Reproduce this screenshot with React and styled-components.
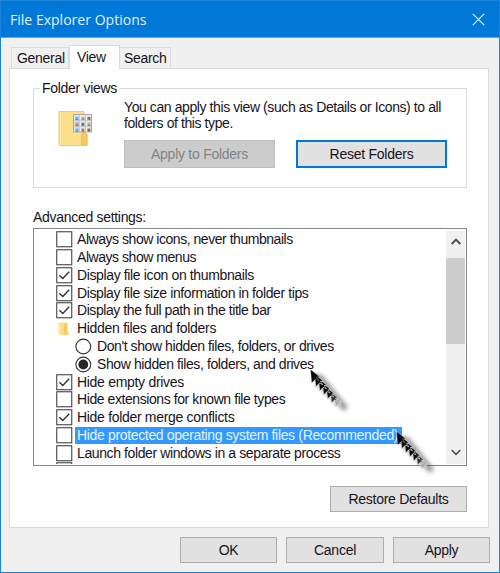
import React from 'react'
import styled, { createGlobalStyle } from 'styled-components'

const GlobalStyle = createGlobalStyle`
  * {
    box-sizing: border-box;
  }
  body {
    margin: 0;
    overflow: hidden;
  }
`

const Window = styled.div`
  position: relative;
  width: 500px;
  height: 573px;
  display: flex;
  flex-direction: column;
  border: 1px solid #1a84d9;
  background: #f0f0f0;
  color: #17131c;
  font: 14px/16px "Liberation Sans", Arial, sans-serif;
  letter-spacing: -0.3px;
  white-space: nowrap;
`

const TitleBar = styled.header`
  height: 37px;
  flex: none;
  display: flex;
  align-items: center;
  justify-content: space-between;
  padding: 1px 14px 0 9px;
  background: #0078d7;
  border-bottom: 1px solid #5fa9e6;
  color: #e4f1fb;
  font-family: "Open Sans", "Noto Sans", sans-serif;
  font-size: 14px;
`

const Title = styled.span`
  letter-spacing: 0.02px;
`

const Tabs = styled.nav`
  display: flex;
  align-items: flex-end;
  height: 30px;
  flex: none;
  padding-left: 10px;
`

const Tab = styled.div`
  position: relative;
  z-index: ${p => p.$active ? 1 : 0};
  width: ${p => p.$width}px;
  height: ${p => p.$active ? 24 : 21}px;
  margin-bottom: ${p => p.$active ? -1 : 0}px;
  padding: ${p => p.$active ? '3px 0 0 7px' : '2px 0 0 5px'};
  border: 1px solid #dcdcdc;
  border-bottom: 0;
  ${p => p.$joined && 'border-left: 0; padding-left: 4px;'}
  background: ${p => p.$active ? '#fff' : '#f0f0f0'};
`

const Panel = styled.main`
  width: 480px;
  height: 460px;
  flex: none;
  margin-left: 8px;
  padding: 11px 21px 0 23px;
  border: 1px solid #dcdcdc;
  background: #fff;
`

const Group = styled.fieldset`
  height: 108px;
  width: 434px;
  margin: 0;
  padding: 0;
  border: 1px solid #dcdcdc;
`

const Legend = styled.legend`
  margin-left: 6px;
  padding: 0 2px;
  height: 17px;
  line-height: 17px;
`

const GroupBody = styled.div`
  display: flex;
  padding-left: 24px;
  > svg {
    margin-top: 13px;
    margin-right: 31px;
    flex: none;
  }
`

const Description = styled.p`
  margin: 2px 0 9px;
  letter-spacing: -0.41px;
`

const ButtonRow = styled.div`
  display: flex;
  gap: ${p => p.$gap}px;
`

const Button = styled.button`
  width: ${p => p.$width}px;
  height: ${p => p.$height || 26}px;
  padding: 0;
  border: 1px solid #adadad;
  background: #e1e1e1;
  color: inherit;
  font: inherit;
  letter-spacing: -0.26px;
  ${p => p.$focused && 'border: 2px solid #0078d7; outline: 0;'}
  &:disabled {
    border-color: #bfbfbf;
    background: #cccccc;
    color: #838383;
  }
`

const ListLabel = styled.div`
  margin: 21px 0 3px;
`

const List = styled.div`
  display: flex;
  width: 434px;
  height: 238px;
  padding: 2px 1px 1px 0;
  border: 1px solid #828790;
  overflow: hidden;
`

const Rows = styled.div`
  flex: 1;
  overflow: hidden;
`

const Row = styled.div`
  display: flex;
  align-items: center;
  height: 17.78px;
  padding-left: ${p => p.$nested ? 41 : 22}px;
  > svg {
    flex: none;
  }
`

const RowText = styled.span`
  height: 17px;
  margin-left: ${p => p.$nested ? 3 : 2}px;
  padding: 0 ${p => p.$selected ? 4 : 2}px 0 2px;
  line-height: 17px;
  letter-spacing: ${p => p.$spacing || 0}px;
  background: ${p => p.$selected ? '#3399ff' : 'transparent'};
  color: ${p => p.$selected ? '#e6f3ff' : 'inherit'};
`

const ScrollBar = styled.div`
  width: 19px;
  display: flex;
  flex-direction: column;
  justify-content: space-between;
  background: #f0f0f0;
`

const ScrollThumb = styled.div`
  height: 86px;
  margin-bottom: auto;
  background: #cdcdcd;
`

const ScrollArrow = styled.div`
  height: 27px;
  display: flex;
  align-items: center;
  justify-content: center;
  padding-top: ${p => p.$up ? 0 : 4}px;
  padding-bottom: ${p => p.$up ? 7 : 0}px;
`

const RestoreRow = styled.div`
  display: flex;
  justify-content: flex-end;
  width: 434px;
  margin-top: 20px;
`

const Footer = styled.footer`
  display: flex;
  justify-content: flex-end;
  gap: 9px;
  padding: 9px 9px 0 0;
`

const Pointer = styled.svg`
  position: absolute;
  left: ${p => p.$x}px;
  top: ${p => p.$y}px;
`

const CheckBox = ({ checked }) => (
  <svg width="17" height="17" viewBox="0 0 17 17" fill="none">
    <rect x="0.75" y="0.75" width="15" height="15" fill="#fff" stroke="#444" strokeWidth="1.1" />
    {checked && <path d="M3.4 8.3 6.8 11.5 13.2 4.8" stroke="#333" strokeWidth="1.4" />}
  </svg>
)

const Radio = ({ checked }) => (
  <svg width="17" height="17" viewBox="0 0 17 17" fill="none">
    <circle cx="8.3" cy="8.5" r="7.4" fill="#fff" stroke="#333" strokeWidth="1.1" />
    {checked && <circle cx="8.3" cy="8.5" r="4.9" fill="#262626" />}
  </svg>
)

const SmallFolder = () => (
  <svg width="17" height="17" viewBox="0 0 17 17">
    <path d="M2.5 2.5h8.5v9h1.5v3.5h-10z" fill="#fbdc83" />
    <path d="M8 4.5 11.5 3v11L8 15.3z" fill="#f5cd66" />
    <path d="M2.5 2.5h2V15h-2z" fill="#fde8a9" />
  </svg>
)

const thumbs = ['#76aede', '#c8a45c', '#bd5a36', '#e08a55', '#5577a4', '#a6b997', '#6db1e5', '#b9824b', '#ad5138']

const LargeFolder = () => (
  <svg width="35" height="37" viewBox="0 0 35 37">
    <path d="M1 1.5h25v22l3 1v11H1z" fill="#fcdf89" stroke="#eecb6c" />
    <path d="M2.5 2v32.5" stroke="#ffebb2" />
    <path d="M23.5 35.5V25l2-3 3.5 2v11.5z" fill="#f6cb5c" stroke="#e8bc50" strokeWidth=".8" />
    <rect x="15.5" y="4.5" width="18" height="17.5" fill="#f4f4f4" stroke="#aaa" />
    {thumbs.map((color, i) => {
      const x = 16.5 + (i % 3) * 6
      const y = 5.5 + Math.floor(i / 3) * 5.8
      return (
        <g key={i}>
          <rect x={x} y={y} width="4.5" height="4.6" fill={i % 3 === 0 ? '#b9dbf2' : '#dfe3e3'} />
          <rect x={x + 1} y={y + 1.5} width="2.8" height="2.3" fill={color} />
          <path d={`M${x + 1} ${y + 4.2}h3`} stroke="#4f6c83" strokeWidth=".8" />
        </g>
      )
    })}
    <path d="M21.5 5v17M27.5 5v17M16 10.7h17M16 16.5h17" stroke="#b9b9b9" strokeWidth=".7" />
  </svg>
)

// a trail of arrow heads that fades out towards its lower right end
const ArrowTrail = ({ id, x, y }) => (
  <Pointer $x={x} $y={y} width="50" height="52" viewBox="0 0 50 52">
    <defs>
      <filter id={id} x="-30%" y="-30%" width="160%" height="160%">
        <feGaussianBlur stdDeviation="1.9" />
      </filter>
    </defs>
    <path d="M7 6 15 9 40 40 36 44 9 18z" fill="#555" opacity=".6" filter={`url(#${id})`} />
    {[6, 5, 4, 3, 2, 1, 0].map(i => (
      <path
        key={i}
        transform={`translate(${2.5 + i * 4} ${2.5 + i * 4.5}) scale(${1 - i * 0.035})`}
        d="M0 0 9.2 7.2 6 7.6 8.6 11.2 5.2 9.4 1.2 13.4z"
        fill={i > 5 ? '#aaa' : i > 4 ? '#333' : '#080808'}
        stroke="#e8e8e8"
        strokeWidth={i ? 0.7 : 0.3}
      />
    ))}
  </Pointer>
)

const settings = [
  { text: 'Always show icons, never thumbnails', spacing: -0.46 },
  { text: 'Always show menus', spacing: -0.46 },
  { text: 'Display file icon on thumbnails', checked: true, spacing: -0.37 },
  { text: 'Display file size information in folder tips', checked: true, spacing: -0.4 },
  { text: 'Display the full path in the title bar', checked: true, spacing: -0.43 },
  { text: 'Hidden files and folders', type: 'folder', spacing: -0.3 },
  { text: "Don't show hidden files, folders, or drives", type: 'radio', spacing: -0.42 },
  { text: 'Show hidden files, folders, and drives', type: 'radio', checked: true, spacing: -0.4 },
  { text: 'Hide empty drives', checked: true, spacing: -0.3 },
  { text: 'Hide extensions for known file types', spacing: -0.42 },
  { text: 'Hide folder merge conflicts', checked: true, spacing: -0.31 },
  { text: 'Hide protected operating system files (Recommended)', selected: true, spacing: -0.34 },
  { text: 'Launch folder windows in a separate process', spacing: -0.39 },
  { text: '' }
]

const RowIcon = ({ type, checked }) => {
  if (type === 'folder') return <SmallFolder />
  if (type === 'radio') return <Radio checked={checked} />
  return <CheckBox checked={checked} />
}

export default function App () {
  return (
    <Window>
      <GlobalStyle />
      <TitleBar>
        <Title>File Explorer Options</Title>
        <svg width="13" height="13" viewBox="0 0 13 13" stroke="#e4f1fb" strokeWidth="1.2">
          <path d="M.8.8 12.2 12.2M12.2.8.8 12.2" />
        </svg>
      </TitleBar>
      <Tabs>
        <Tab $width={58}>General</Tab>
        <Tab $width={51} $active>View</Tab>
        <Tab $width={51} $joined>Search</Tab>
      </Tabs>
      <Panel>
        <Group>
          <Legend>Folder views</Legend>
          <GroupBody>
            <LargeFolder />
            <div>
              <Description>
                You can apply this view (such as Details or Icons) to all<br />
                folders of this type.
              </Description>
              <ButtonRow $gap={21}>
                <Button $width={151} $height={28} disabled>Apply to Folders</Button>
                <Button $width={151} $height={28} $focused>Reset Folders</Button>
              </ButtonRow>
            </div>
          </GroupBody>
        </Group>
        <ListLabel>Advanced settings:</ListLabel>
        <List>
          <Rows>
            {settings.map(({ text, type, checked, selected, spacing }, i) => (
              <Row key={i} $nested={type === 'radio'}>
                <RowIcon type={type} checked={checked} />
                {text && (
                  <RowText $nested={type === 'radio'} $selected={selected} $spacing={spacing}>{text}</RowText>
                )}
              </Row>
            ))}
          </Rows>
          <ScrollBar>
            <ScrollArrow $up>
              <svg width="10" height="7" viewBox="0 0 10 7" fill="none" stroke="#505050" strokeWidth="2">
                <path d="M.7 6 5 1.6 9.3 6" />
              </svg>
            </ScrollArrow>
            <ScrollThumb />
            <ScrollArrow>
              <svg width="10" height="7" viewBox="0 0 10 7" fill="none" stroke="#505050" strokeWidth="1.6">
                <path d="M.7 1 5 5.4 9.3 1" />
              </svg>
            </ScrollArrow>
          </ScrollBar>
        </List>
        <RestoreRow>
          <Button $width={137}>Restore Defaults</Button>
        </RestoreRow>
      </Panel>
      <Footer>
        <Button $width={97}>OK</Button>
        <Button $width={98}>Cancel</Button>
        <Button $width={97}>Apply</Button>
      </Footer>
      <ArrowTrail id="trail-show" x={307} y={366} />
      <ArrowTrail id="trail-hide" x={393} y={428} />
    </Window>
  )
}
